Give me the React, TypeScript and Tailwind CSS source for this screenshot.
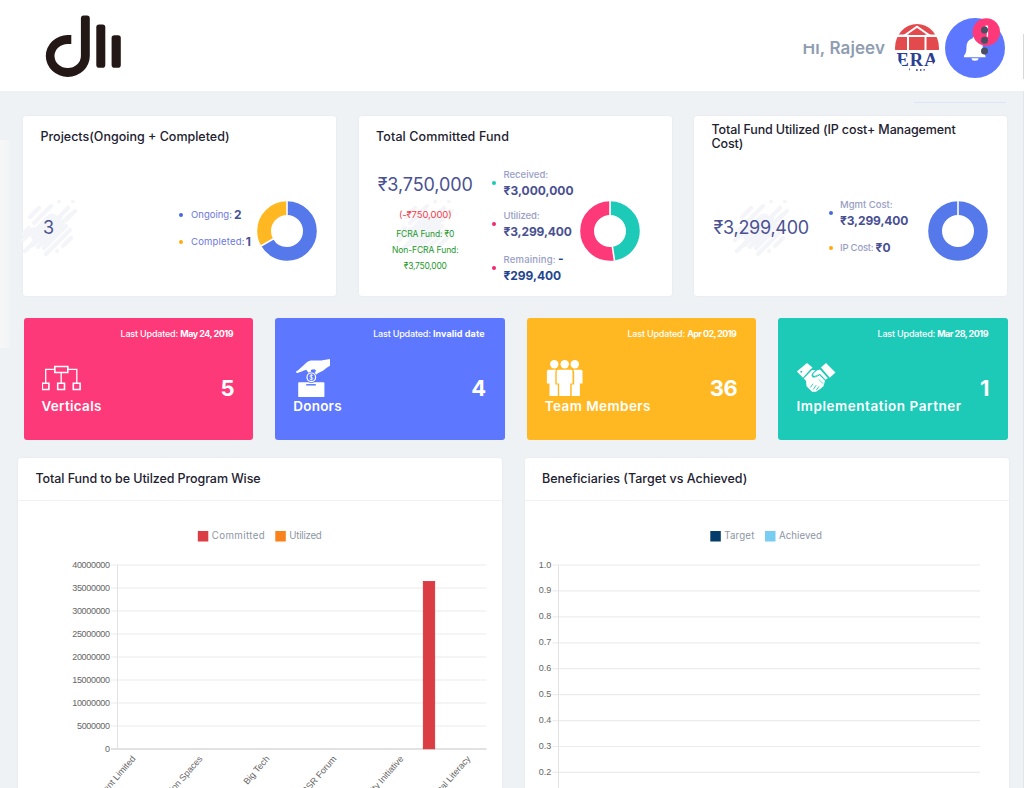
import React from "react";
import type { ReactNode } from "react";

type Slice = { color: string; value: number };

function Donut({ slices }: { slices: Slice[] }) {
  let start = 0;
  const arcs = slices.map((s) => {
    const from = start;
    start += s.value;
    return { ...s, from };
  });
  return (
    <svg width="60" height="60" viewBox="0 0 60 60" className="block shrink-0">
      {arcs.map((a) => (
        <circle
          key={a.color}
          cx="30"
          cy="30"
          r="22.9"
          fill="none"
          stroke={a.color}
          strokeWidth="13.8"
          pathLength="100"
          strokeDasharray={`${a.value} ${100 - a.value}`}
          strokeDashoffset={-a.from}
          transform="rotate(-90 30 30)"
        />
      ))}
      {arcs.map((a) => (
        <line
          key={a.from}
          x1="30"
          y1="16"
          x2="30"
          y2="0"
          stroke="#fff"
          strokeWidth="1.6"
          transform={`rotate(${a.from * 3.6} 30 30)`}
        />
      ))}
    </svg>
  );
}

function Splash() {
  return (
    <svg
      width="58"
      height="58"
      viewBox="0 0 58 58"
      className="absolute left-1/2 top-1/2 -translate-x-1/2 -translate-y-1/2"
      stroke="#f4f5f8"
      strokeLinecap="round"
      fill="none"
    >
      <path strokeWidth="4.2" d="M10 18 19 9M14 24 31 7M3 35 9 29M3 41 14 30M5 52 14 43M13 46 40 19M18 48 50 16M24 49 46 27M26 55 50 31M43 47 51 39M36 21 48 9M46 21 55 12" />
      <path strokeWidth="4" d="M39 2.500h.01M53 2.500h.01M37 52h.01" />
      <path strokeWidth="13" d="M17 36 32 21M24 40 38 26" />
    </svg>
  );
}

function Dot({ className }: { className: string }) {
  return <span className={`size-1 shrink-0 rounded-full ${className}`} />;
}

function StatCard({ title, children }: { title: ReactNode; children: ReactNode }) {
  return (
    <section className="flex h-[180px] w-[313px] flex-col rounded-[3px] bg-white shadow-[0_0_2px_rgba(82,63,105,0.08)]">
      <h3 className="flex h-[42px] items-center whitespace-nowrap pl-[17.5px] text-[12.5px] font-medium leading-[14px] text-[#1d2130]">
        {title}
      </h3>
      <div className="flex flex-1 items-start">{children}</div>
    </section>
  );
}

function Amount({ label, value, dot, valueClass }: { label: ReactNode; value: string; dot: string; valueClass: string }) {
  return (
    <div className="flex items-center gap-[7.5px] whitespace-nowrap">
      <Dot className={dot} />
      <div>
        <div className="text-[9.5px] font-medium leading-4 text-[#989ec6]">{label}</div>
        <div className={`text-[12px] font-bold leading-[16px] ${valueClass}`}>{value}</div>
      </div>
    </div>
  );
}

function Tile({
  color,
  date,
  dateClass,
  icon,
  label,
  labelClass,
  count,
}: {
  color: string;
  date: string;
  dateClass: string;
  icon: ReactNode;
  label: string;
  labelClass: string;
  count: string;
}) {
  return (
    <section className={`h-[121.5px] w-[229.5px] rounded-[3px] text-white ${color}`}>
      <div className="whitespace-nowrap pr-[20px] pt-2 text-right text-[9px] leading-4">
        <span className="font-medium tracking-[-0.19px]">Last Updated: </span>
        <span className={`font-bold ${dateClass}`}>{date}</span>
      </div>
      <div className="flex justify-between pl-[18px] pr-[19px] pt-4">
        <div>
          <div className="h-[38px]">{icon}</div>
          <div className={`whitespace-nowrap text-[13.5px] font-semibold leading-5 ${labelClass}`}>{label}</div>
        </div>
        <div className="mt-4 text-[22px] font-bold leading-7 tracking-[-0.5px]">{count}</div>
      </div>
    </section>
  );
}

function VerticalsIcon() {
  return (
    <svg width="44" height="38" viewBox="0 0 44 38" fill="none" stroke="#fff" strokeWidth="1.6">
      <path d="M12.800 8.500h13v6h-13zM.3 25.300h6.600v6.200H.3zM15.700 25.300h6.800v6.200h-6.800zM31.300 25.300h6.800v6.200h-6.800z" />
      <path strokeWidth="1.300" d="M12.800 11.300H3.700v14M25.800 11.300h9v14M19.200 14.500v11" />
    </svg>
  );
}

function DonorsIcon() {
  return (
    <svg width="44" height="39" viewBox="0 0 44 39">
      <path fill="#fff" d="M6 24.2h24.6a.8.8 0 0 1 .8.8v13.4a.8.8 0 0 1-.8.8H6a.8.8 0 0 1-.8-.8V25a.8.8 0 0 1 .8-.8z" />
      <path d="M13.2 26.8h9.6" stroke="#5d78ff" strokeWidth="1.5" />
      <path
        fill="#fff"
        d="M3.2 13.6C6 11.6 9.5 8 13 4.900C15.500 2.600 17.500 2.300 20.500 2.400C25 2.700 28 2.800 31 1.900L37 1V7.700C34 9.200 32 11.400 29.500 13C27.500 14.300 25 14.800 23.700 16.200L22.300 17.500 20.700 16.100C21.800 14.500 23.100 13.200 22.800 12.200C22 11 19.700 11.200 17.800 12.100C18.700 13.500 17.600 15.500 16.300 16.300C14.800 14.500 14.500 13 13.300 11.800C10.300 12.600 7.200 14.400 4.300 15C2.900 15 2.700 14 3.200 13.600Z"
      />
      <circle cx="18.300" cy="19.300" r="5.600" fill="#5d78ff" />
      <circle cx="18.300" cy="19.300" r="4.300" fill="#5d78ff" stroke="#fff" strokeWidth="1.200" />
      <path
        d="M19.900 17.800C19.400 16.800 17 16.700 16.900 18C16.900 19.500 19.800 18.900 19.800 20.500C19.700 21.900 17.200 21.900 16.700 20.800M18.300 16.300v6"
        stroke="#fff"
        strokeWidth=".9"
        fill="none"
      />
    </svg>
  );
}

function TeamIcon() {
  return (
    <svg width="44" height="39" viewBox="0 0 44 39" fill="#fff">
      <circle cx="9.300" cy="6.300" r="4.200" />
      <circle cx="19.700" cy="6.300" r="4.200" />
      <circle cx="29.800" cy="6.300" r="4.200" />
      <path d="M13.300 11.800h12.500a1.700 1.700 0 0 1 1.700 1.700v12h-2.300V38H14.200V25.500h-2.500v-12a1.700 1.700 0 0 1 1.600-1.700z" />
      <path d="M3.400 11.800h7.800a4 4 0 0 0-.9 2.400v12.200h2.500V38H4.500V25.500H1.900V13.300a1.500 1.500 0 0 1 1.500-1.500zM28.300 11.800h7.700a1.500 1.500 0 0 1 1.500 1.500v12.200h-2.600V38h-8.200V26.400h2.500V14.200a4 4 0 0 0-.9-2.400z" />
    </svg>
  );
}

function PartnerIcon() {
  return (
    <svg width="44" height="38" viewBox="0 0 44 38">
      <path fill="#fff" d="M.8 13.500 11 5 16.500 9.500 7 19.800zM24.900 9.500 30 5 39.500 14.500 33.800 19.800z" />
      <circle cx="5.300" cy="13.800" r="1" fill="#1dc9b7" />
      <path fill="#fff" d="M7.700 20.500 16 12 19.500 12.200 16.200 15.500C15 17.300 16 19.300 18.200 19L23 16.800 29 22.800 27.500 28.200 23.500 31.500 20 33.800H16L10.500 28.200 10 22.800z" />
      <path fill="#fff" d="M17.500 15.500 20.800 12.600 24 11.600 31.800 20 29.400 22 23.700 16 18.500 17.900C17.200 18 16.800 16.800 17.500 15.500z" />
      <path d="M14.300 29.500 17 25.700M17.200 31.400 20.200 27.200M20.500 32 23 28.400" stroke="#1dc9b7" strokeWidth=".9" />
      <path d="M23.300 15.800 30 22.600M22.500 21.200 27.500 26" stroke="#1dc9b7" strokeWidth=".7" />
      <path d="M8.500 18.500 15.500 11M15.800 17.800C17 20 19 19.200 23 17.300" fill="none" stroke="#1dc9b7" strokeWidth="1" />
    </svg>
  );
}

function EraLogo() {
  return (
    <svg width="44" height="48" viewBox="0 0 44 48" className="block">
      <defs>
        <clipPath id="era">
          <ellipse cx="22" cy="24" rx="22" ry="24" />
        </clipPath>
      </defs>
      <g clipPath="url(#era)">
        <path fill="#e34a4e" d="M0 0h44v10.600H0zM0 13h12v13H0zM14 13h15.500v13H14zM31.500 13H44v13H31.500z" />
        <path d="M9 11.800 22 2.800 35 11.800" fill="none" stroke="#fff" strokeWidth="2" />
        <path d="M13 11 22 5 31 11z" fill="#e34a4e" />
        <text x="1.500" y="41.500" fontFamily="Liberation Serif, serif" fontWeight="700" fontSize="18.500" textLength="41" fill="#2b4093">
          ERA
        </text>
        <path d="M10 46h1M14 45.500h1M21 46h1.700M25 46h1.500M28.500 46h1.500" stroke="#5a69ad" strokeWidth="2" />
      </g>
    </svg>
  );
}

function Header() {
  return (
    <header className="flex h-[91px] shrink-0 items-start justify-between bg-white">
      <svg width="80" height="64" viewBox="0 0 80 64" className="ml-[44px] mt-[14px]" fill="#231815">
        <path d="M27.300 21.100H23.700A22 20.900 0 1 0 45.800 42V4.500Q45.800 1.600 43 1.600H39.700Q36.900 1.600 36.900 4.500V42A13.200 12 0 1 1 23.700 30H27.300z" />
        <rect x="52.300" y="10.500" width="9" height="43.200" rx="2.800" />
        <rect x="67.600" y="21.300" width="9.200" height="32.400" rx="2.800" />
      </svg>
      <div className="flex items-start">
        <div className="relative mt-[35.500px] whitespace-nowrap text-[17px] font-semibold leading-6 tracking-[0.100px] text-[#8f9db1]">
          Hi, Rajeev
          <span className="absolute left-0 top-0 h-[8px] w-[20px] bg-white" />
        </div>
        <div className="ml-[10px] mt-6">
          <EraLogo />
        </div>
        <div className="relative ml-[6px] mr-[19px] mt-[18px] size-[60px] rounded-full bg-[#5d78ff]">
          <svg width="60" height="60" viewBox="0 0 60 60" className="block">
            <path
              fill="#fff"
              d="M29.500 18.500a2 2 0 0 1 2 2C36 21.500 37.700 25 37.700 28.500C37.700 34 39 36 40.500 37.700V39.200H19V37.700C20.500 36 21.500 34 21.500 28.500C21.500 25 23.500 21.500 27.500 20.500a2 2 0 0 1 2-2zM26.500 40.200h7a3.500 2.500 0 0 1-7 0z"
            />
          </svg>
          <svg width="30" height="40" viewBox="0 0 30 40" className="absolute left-[27px] top-0">
            <circle cx="14.300" cy="14" r="13.700" fill="#fd397a" />
            <path d="M13.500 8.300h1.900v10.500" stroke="#fff" strokeWidth="1.400" fill="none" />
            <circle cx="12.500" cy="12" r="3.500" fill="#484f63" />
            <circle cx="12.500" cy="22.300" r="3.500" fill="#484f63" />
            <circle cx="12.500" cy="33" r="3.500" fill="#484f63" />
          </svg>
        </div>
      </div>
    </header>
  );
}

function ChartCard({ title, children }: { title: ReactNode; children: ReactNode }) {
  return (
    <section className="h-[340px] w-[484px] rounded-[3px] bg-white shadow-[0_0_2px_rgba(82,63,105,0.08)]">
      <h3 className="flex h-[43px] items-center whitespace-nowrap border-b border-[#f0f1f5] pl-[17.500px] pt-px text-[12.5px] font-medium text-[#1d2130]">
        {title}
      </h3>
      {children}
    </section>
  );
}

const fundTicks = ["40000000", "35000000", "30000000", "25000000", "20000000", "15000000", "10000000", "5000000", "0"];
const programs = ["Development Limited", "Innovation Spaces", "Big Tech", "CSR Forum", "Ability Initiative", "Digital Literacy"];
const shareTicks = ["1.0", "0.9", "0.8", "0.7", "0.6", "0.5", "0.4", "0.3", "0.2"];

function Legend({ x, color, label, width }: { x: number; color: string; label: string; width: number }) {
  return (
    <>
      <rect x={x} y="30" width="10.500" height="10.500" fill={color} />
      <text x={x + 14} y="38" fontSize="9.700" fontFamily="Inter, sans-serif" fill="#8c96a3" textLength={width}>
        {label}
      </text>
    </>
  );
}

function FundChart() {
  return (
    <svg width="484" height="287" viewBox="0 0 484 287" className="block" fontFamily="Liberation Sans, Arial, sans-serif" fontSize="9">
      <Legend x={179.800} color="#db3d44" label="Committed" width={53} />
      <Legend x={257.300} color="#f9821c" label="Utilized" width={32.500} />
      {fundTicks.map((t, i) => (
        <g key={t}>
          <line x1="93" x2="468.500" y1={64 + i * 23} y2={64 + i * 23} stroke={i === 8 ? "#c6c6c6" : "#ececec"} strokeWidth="1.200" />
          <text x="92" y={66.500 + i * 23} textAnchor="end" fill="#666" textLength={t.length * 4.720}>
            {t}
          </text>
        </g>
      ))}
      <line x1="99.500" x2="99.500" y1="64" y2="248" stroke="#e2e2e2" />
      <rect x="405.300" y="80.500" width="11.400" height="167.300" fill="#db3d44" stroke="#d92f38" strokeWidth=".8" />
      {programs.map((p, i) => (
        <text
          key={p}
          x={118 + i * 67}
          y={258}
          textAnchor="end"
          fill="#666"
          fontSize="9"
          transform={`rotate(-49 ${118 + i * 67} 258)`}
        >
          {p}
        </text>
      ))}
    </svg>
  );
}

function BeneficiaryChart() {
  return (
    <svg width="484" height="287" viewBox="0 0 484 287" className="block" fontFamily="Liberation Sans, Arial, sans-serif" fontSize="9">
      <Legend x={185.300} color="#043d6b" label="Target" width={30} />
      <Legend x={240} color="#79ccf2" label="Achieved" width={43} />
      {shareTicks.map((t, i) => (
        <g key={t}>
          <line x1="27.500" x2="455" y1={64 + i * 25.930} y2={64 + i * 25.930} stroke="#ececec" strokeWidth="1.200" />
          <text x="26.300" y={66.500 + i * 25.930} textAnchor="end" fill="#666">
            {t}
          </text>
        </g>
      ))}
      <line x1="33.500" x2="33.500" y1="64" y2="287" stroke="#e2e2e2" />
    </svg>
  );
}

export default function App() {
  return (
    <div className="relative flex h-[788px] w-[1024px] flex-col overflow-hidden bg-[#eef2f5] font-['Inter',sans-serif]">
      <Header />

      <div className="ml-[23px] mt-[25px] flex h-[180px] w-[984px] shrink-0 justify-between">
        <StatCard title="Projects(Ongoing + Completed)">
          <div className="w-[156px] pl-5 pt-[58px] text-[18px] leading-6 text-[#4a5193]">
            <span className="relative inline-block">
              <Splash />
              <span className="relative">3</span>
            </span>
          </div>
          <div className="pt-[43.500px] text-[9.500px] text-[#6b77dd]">
            <div className="flex h-[27px] items-center">
              <Dot className="mr-[8px] bg-[#4a66e6]" />
              Ongoing:<b className="ml-[2px] text-[12px] text-[#484f93]">2</b>
            </div>
            <div className="flex h-[27px] items-center">
              <Dot className="mr-[8px] bg-[#ffab12]" />
              <span className="tracking-[0.2px]">Completed:</span>
              <b className="ml-px text-[12px] text-[#484f93]">1</b>
            </div>
          </div>
          <div className="ml-auto mr-[19px] mt-[43px]">
            <Donut slices={[{ color: "#5578eb", value: 66.7 }, { color: "#ffb822", value: 33.3 }]} />
          </div>
        </StatCard>

        <StatCard title={<span className="tracking-[0.11px]">Total Committed Fund</span>}>
          <div className="w-[133.500px] whitespace-nowrap pt-[14.500px] text-center text-[8.500px] leading-4 text-[#25992b]">
            <div className="mb-[10px] text-[18px] leading-6 tracking-[-0.1px] text-[#4a5193]">₹3,750,000</div>
            <div className="relative mb-[3px] text-[9.500px] tracking-[-0.100px] text-[#f5404a]">
              <span className="absolute left-1/2 top-[21px]">
                <Splash />
              </span>
              <span className="relative">(-₹750,000)</span>
            </div>
            <div className="relative tracking-[-0.120px]">FCRA Fund: ₹0</div>
            <div className="relative tracking-[-0.080px]">Non-FCRA Fund:</div>
            <div className="relative tracking-[-0.240px]">₹3,750,000</div>
          </div>
          <div className="flex flex-col pt-[9px]">
            <Amount label="Received:" value="₹3,000,000" dot="bg-[#1dc9b7]" valueClass="tracking-[0.02px] text-[#484f93]" />
            <div className="h-[8.500px]" />
            <Amount label={<span className="tracking-[-0.100px]">Utilized:</span>} value="₹3,299,400" dot="bg-[#f5276e]" valueClass="tracking-[-0.12px] text-[#484f93]" />
            <div className="h-[12px]" />
            <Amount
              label={
                <>
                  <span className="tracking-[0.200px]">Remaining:</span>
                  <b className="ml-[2px] text-[12px] leading-3 text-[#1f4590]">-</b>
                </>
              }
              value="₹299,400"
              dot="bg-[#f5276e]"
              valueClass="tracking-[-0.04px] text-[#1f4590]"
            />
          </div>
          <div className="ml-auto mr-[32px] mt-[43px]">
            <Donut slices={[{ color: "#1dc9b7", value: 47.6 }, { color: "#fd397a", value: 52.4 }]} />
          </div>
        </StatCard>

        <StatCard
          title={
            <span className="tracking-[-0.12px]">
              Total Fund Utilized (IP cost+ Management
              <br />
              Cost)
            </span>
          }
        >
          <div className="w-[134.500px] pt-[58px] text-center text-[18px] leading-6 tracking-[-0.27px] text-[#4a5193]">
            <span className="relative inline-block">
              <Splash />
              <span className="relative">₹3,299,400</span>
            </span>
          </div>
          <div className="flex flex-col pt-[38.500px]">
            <Amount label="Mgmt Cost:" value="₹3,299,400" dot="bg-[#4a66e6]" valueClass="tracking-[-0.12px] text-[#484f93]" />
            <div className="mt-[10.500px] flex h-[18px] items-center whitespace-nowrap text-[9.500px] font-medium text-[#989ec6]">
              <Dot className="mr-[7.500px] bg-[#ffab12]" />
              <span className="tracking-[-0.200px]">IP Cost:</span>
              <b className="ml-[2px] text-[12px] font-bold text-[#484f93]">₹0</b>
            </div>
          </div>
          <div className="ml-auto mr-[19.500px] mt-[43px]">
            <Donut slices={[{ color: "#5578eb", value: 100 }]} />
          </div>
        </StatCard>
      </div>

      <div className="ml-[23.500px] mt-[22px] flex w-[984.500px] shrink-0 justify-between">
        <Tile color="bg-[#fd397a]" date="May 24, 2019" dateClass="tracking-[-0.49px]" icon={<VerticalsIcon />} label="Verticals" labelClass="tracking-[0.28px]" count="5" />
        <Tile color="bg-[#5d78ff]" date="Invalid date" dateClass="tracking-[0.09px]" icon={<DonorsIcon />} label="Donors" labelClass="tracking-[0.25px]" count="4" />
        <Tile color="bg-[#ffb822]" date="Apr 02, 2019" dateClass="tracking-[-0.59px]" icon={<TeamIcon />} label="Team Members" labelClass="tracking-[0.42px]" count="36" />
        <Tile color="bg-[#1dc9b7]" date="Mar 28, 2019" dateClass="tracking-[-0.53px]" icon={<PartnerIcon />} label="Implementation Partner" labelClass="tracking-[0.54px]" count="1" />
      </div>

      <div className="ml-[18px] mt-[18.500px] flex w-[990.500px] shrink-0 justify-between">
        <ChartCard title={<span className="tracking-[-0.080px]">Total Fund to be Utilzed Program Wise</span>}>
          <FundChart />
        </ChartCard>
        <ChartCard title="Beneficiaries (Target vs Achieved)">
          <BeneficiaryChart />
        </ChartCard>
      </div>

      <div className="absolute left-0 top-[140px] h-[208px] w-[10px] bg-linear-to-r from-[#f7f7f7] to-[#f1f4f6]" />
      <div className="absolute left-[914px] top-[102px] h-px w-[92px] bg-[#dde5f9]" />
      <div className="absolute left-[1023px] top-[34px] h-[45px] w-px bg-[#d8d8d8]" />
      <div className="absolute left-[1023px] top-[91px] h-[697px] w-px bg-[#e2e5e9]" />
    </div>
  );
}
